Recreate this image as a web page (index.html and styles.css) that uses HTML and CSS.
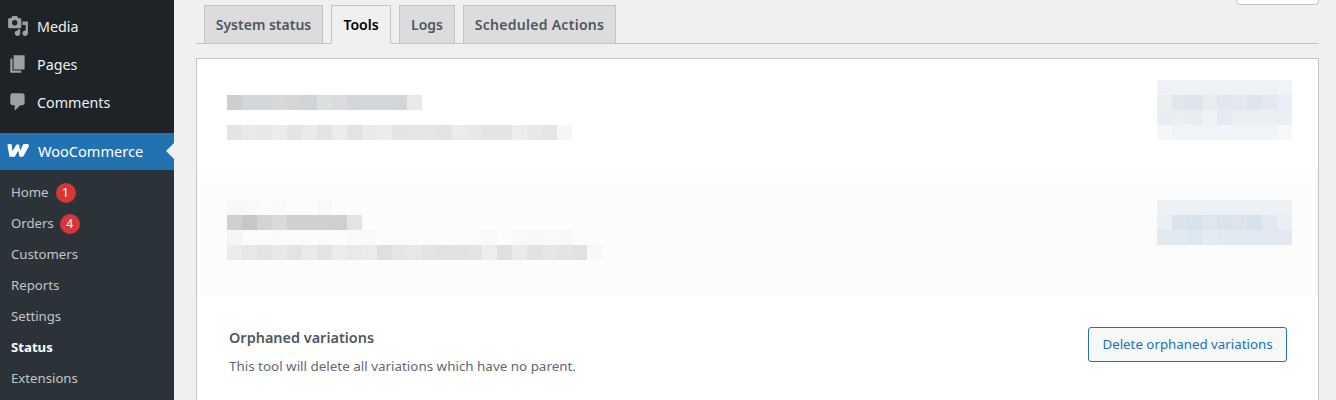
FILE: index.html
```html
<!DOCTYPE html>
<html lang="en">
<head>
<meta charset="utf-8">
<title>WooCommerce status - Tools</title>
<link rel="stylesheet" href="styles.css">
</head>
<body>
<div class="layout">
  <aside class="sidebar">
    <ul class="menu">
      <li class="menu-item">
        <svg class="menu-icon" viewBox="0 0 20 20"><path d="M13 11V4c0-.55-.45-1-1-1h-1.670L9 1H5L3.670 3H2c-.55 0-1 .45-1 1v7c0 .55.45 1 1 1h10c.55 0 1-.45 1-1zM7 4.500c1.380 0 2.500 1.120 2.500 2.500S8.380 9.500 7 9.500 4.500 8.380 4.500 7 5.620 4.500 7 4.500zM14 6h5v10.500c0 1.380-1.120 2.500-2.500 2.500S14 17.880 14 16.500s1.120-2.500 2.500-2.500c.17 0 .34.02.5.05V9h-3V6zm-4 8.050V13h2v3.500c0 1.380-1.120 2.500-2.500 2.500S7 17.880 7 16.500 8.120 14 9.500 14c.17 0 .34.02.5.05z"/></svg>
        <span>Media</span>
      </li>
      <li class="menu-item">
        <svg class="menu-icon" viewBox="0 0 20 20"><path d="M6 15V2h10v13H6zm-1 1h8v2H3V5h2v11z"/></svg>
        <span>Pages</span>
      </li>
      <li class="menu-item">
        <svg class="menu-icon" viewBox="0 0 20 20"><path d="M5 2h9c1.100 0 2 .9 2 2v7c0 1.100-.9 2-2 2h-2l-5 5v-5H5c-1.100 0-2-.9-2-2V4c0-1.100.9-2 2-2z"/></svg>
        <span>Comments</span>
      </li>
      <li class="menu-item menu-item-current">
        <svg class="woo-icon" viewBox="0 0 22 13"><path d="M0.500 1.200C0.500.5 1 0 1.800 0h2.700l1 7.200L9.400.4h2.700l1 6.600L16 .8C16.400 0 17.200 0 18 0h2.200C21.600 0 22.300 1.200 21.700 2.400L17 11.300c-.5 1-1.200 1.500-2.200 1.500h-2.300l-1.200-6.400-3.500 6.400H3.500C2.800 12.800 2.400 12.300 2.300 11.700z"/></svg>
        <span>WooCommerce</span>
      </li>
    </ul>
    <ul class="submenu">
      <li class="submenu-item"><span>Home</span><span class="badge badge-home">1</span></li>
      <li class="submenu-item"><span>Orders</span><span class="badge">4</span></li>
      <li class="submenu-item"><span>Customers</span></li>
      <li class="submenu-item"><span>Reports</span></li>
      <li class="submenu-item"><span>Settings</span></li>
      <li class="submenu-item submenu-item-current"><span>Status</span></li>
      <li class="submenu-item"><span>Extensions</span></li>
    </ul>
  </aside>
  <main class="content">
    <div class="help-tab"></div>
    <nav class="tabs">
      <a class="tab tab-status">System status</a>
      <a class="tab tab-active">Tools</a>
      <a class="tab tab-logs">Logs</a>
      <a class="tab tab-scheduled">Scheduled Actions</a>
    </nav>
    <section class="card">
      <div class="tool tool-first">
        <div class="tool-info">
          <div class="blur blur-t1"></div>
          <div class="blur blur-s1"></div>
        </div>
        <div class="action-blur">
          <div class="blur blur-a1"></div>
          <div class="blur blur-a2"></div>
          <div class="blur blur-a3"></div>
          <div class="blur blur-a4"></div>
        </div>
      </div>
      <div class="tool tool-second">
        <div class="tool-info">
          <div class="blur blur-t2a"></div>
          <div class="blur blur-t2b"></div>
          <div class="blur blur-s2a"></div>
          <div class="blur blur-s2b"></div>
        </div>
        <div class="action-blur">
          <div class="blur blur-b1"></div>
          <div class="blur blur-b2"></div>
          <div class="blur blur-b3"></div>
        </div>
      </div>
      <div class="tool tool-third">
        <div class="tool-text">
          <h3 class="tool-title">Orphaned variations</h3>
          <p class="tool-desc">This tool will delete all variations which have no parent.</p>
        </div>
        <button class="tool-button" type="button">Delete orphaned variations</button>
      </div>
    </section>
  </main>
</div>
</body>
</html>
```
FILE: styles.css
```css
* { box-sizing: border-box; }
html, body { margin: 0; padding: 0; height: 400px; overflow: hidden; }
body {
  background: #f0f0f1;
  font-family: "Noto Sans", "Open Sans", Arial, sans-serif;
  font-size: 14px;
  color: #50575e;
}
ul { list-style: none; margin: 0; padding: 0; }
.layout { display: flex; height: 400px; }

.sidebar { width: 174px; flex: none; background: #1d2327; padding-top: 7px; display: flex; flex-direction: column; }
.menu-item {
  position: relative;
  display: flex;
  align-items: center;
  height: 38px;
  color: #f0f0f1;
  font-size: 14.3px;
}
.menu-item > span { margin-left: 8px; }
.menu-icon { width: 22px; height: 22px; margin-left: 7px; fill: #9ca1a7; flex: none; }
.menu-item-current {
  margin-top: 12px;
  height: 37px;
  padding-bottom: 2px;
  background: #2271b1;
  color: #fff;
  font-size: 14.55px;
}
.menu-item-current::after {
  content: "";
  position: absolute;
  right: 0;
  top: 10px;
  border: 8px solid transparent;
  border-left-width: 0;
  border-right-color: #f0f0f1;
}
.woo-icon { width: 22px; height: 13px; margin-left: 7px; margin-right: 1px; fill: #fff; flex: none; }
.submenu { flex: 1; background: #2c3338; padding-top: 6px; }
.submenu-item {
  display: flex;
  align-items: center;
  height: 31px;
  padding-left: 11px;
  color: #c3c4c7;
  font-size: 13.2px;
}
.submenu-item-current { color: #fff; font-weight: 700; }
.badge {
  width: 20px;
  height: 20px;
  margin: 2px 0 0 6px;
  border-radius: 50%;
  background: #d63638;
  color: #fff;
  font-size: 12px;
  line-height: 20px;
  text-align: center;
}
.badge-home { margin-left: 7px; }

.content { position: relative; flex: 1; padding: 5px 17px 0 22px; min-width: 0; }
.help-tab {
  position: absolute;
  right: 17px;
  top: -20px;
  width: 83px;
  height: 25px;
  background: #fff;
  border: 1px solid #c3c4c7;
  border-radius: 4px;
}
.tabs { display: flex; gap: 8px; height: 39px; padding-left: 8px; border-bottom: 1px solid #c3c4c7; }
.tab {
  display: flex;
  align-items: center;
  justify-content: center;
  height: 39px;
  padding: 0;
  background: #dcdcde;
  border: 1px solid #c3c4c7;
  color: #50575e;
  font-size: 14px;
  font-weight: 600;
}
.tab-status { width: 119px; }
.tab-logs { width: 56px; }
.tab-scheduled { width: 153px; letter-spacing: .28px; }
.tab-active { width: 60px; background: #f0f0f1; border-bottom-color: #f0f0f1; color: #000; }

.card { margin-top: 14px; height: 360px; background: #fff; border: 1px solid #c3c4c7; border-bottom: 0; }
.tool { display: flex; justify-content: space-between; align-items: flex-start; }
.tool-first { height: 111px; padding: 21px 26px 0 30px; }
.tool-first .tool-info { padding-top: 15px; display: flex; flex-direction: column; gap: 15px; }
.tool-second {
  height: 126px;
  padding: 30px 26px 0 30px;
  background: linear-gradient(180deg, #fdfdfd 0 14px, #fcfcfc 0);
}
.tool-third { padding: 31px 31px 0 32px; }
.tool-text { padding-top: 1px; }
.blur { height: 15px; }
.blur-t1 { width: 195px; background: linear-gradient(90deg,#cccfcd 0 15px,#d3d7da 0 45px,#d7d8da 0 60px,#d5d6d6 0 75px,#cfd4d7 0 90px,#dcdfdf 0 105px,#d9dbde 0 120px,#d3d6d8 0 135px,#d3d7d9 0 165px,#d3d6d8 0 180px,#e8e9eb 0); }
.blur-s1 { width: 345px; background: linear-gradient(90deg,#e4e4e4 0 15px,#e8e9ed 0 30px,#e8e8e8 0 45px,#ebecee 0 60px,#e5e4e2 0 75px,#e9eaed 0 90px,#e3e5e4 0 105px,#ececec 0 120px,#e1e3e7 0 135px,#e9eaec 0 150px,#ebecec 0 165px,#e2e4e6 0 180px,#e4e5e5 0 195px,#e5e6e6 0 210px,#e2e3e7 0 225px,#eaebed 0 240px,#e7e8ea 0 255px,#e3e4e6 0 270px,#e4e4e4 0 285px,#ecedef 0 300px,#e7e8ea 0 315px,#e3e5e7 0 330px,#f5f6f8 0); }
.blur-t2a { width: 105px; background: linear-gradient(90deg,#f8f8f8 0 15px,#f9f9f9 0 30px,#fbfbfb 0 45px,#f9f9f9 0 60px,#fcfcfc 0 90px,#f9f9f9 0); }
.blur-t2b { width: 135px; background: linear-gradient(90deg,#d0d0d0 0 15px,#c6c7cc 0 30px,#d0d5d8 0 45px,#d9dadc 0 60px,#ced0d2 0 90px,#cdd1d1 0 105px,#cdcfd1 0 120px,#e0e4e4 0); }
.blur-s2a { width: 345px; background: linear-gradient(90deg,#f5f5f5 0 15px,#fbfbfb 0 45px,#fafafa 0 60px,#fbfbfb 0 75px,#fafbfd 0 90px,#fbfbfb 0 105px,#fcfcfc 0 120px,#f9fbfa 0 135px,#fafafa 0 150px,#fcfcfc 0 165px,#fafbfb 0 195px,#fbfbfb 0 210px,#fcfcfc 0 225px,#fbfbfb 0 255px,#f9f9f9 0 270px,#fcfcfc 0 285px,#f9f9f9 0 300px,#f8f8f8 0 315px,#fafafa 0 330px,#f7f9f8 0); }
.blur-s2b { width: 375px; background: linear-gradient(90deg,#ecebe9 0 15px,#e6e7eb 0 30px,#e4e4e4 0 45px,#e7e8ea 0 60px,#e4e3e1 0 75px,#e9eaec 0 90px,#e3e5e4 0 105px,#ebecee 0 120px,#e8e9eb 0 135px,#eaebed 0 150px,#dfdfdf 0 165px,#e4e5e7 0 180px,#e6e7e9 0 195px,#e3e3e3 0 210px,#e1e2e4 0 240px,#e3e3e3 0 255px,#ecedef 0 270px,#e0e0e0 0 285px,#eaeaea 0 300px,#e1e2e6 0 315px,#e6e6e6 0 330px,#e4e4e6 0 345px,#e0e1e3 0 360px,#f7f8fa 0); }
.action-blur { width: 135px; }
.blur-a1 { background: linear-gradient(90deg,#eef2f6 0 15px,#edf2f6 0 120px,#f1f4f7 0); }
.blur-a2 { background: linear-gradient(90deg,#e9eef1 0 15px,#dfe7ee 0 30px,#dce5ec 0 45px,#e8ecef 0 60px,#e1e7ec 0 75px,#e4e9ef 0 90px,#dce7ed 0 105px,#e4e8f0 0 120px,#e9eef6 0); }
.blur-a3 { background: linear-gradient(90deg,#e8edf5 0 15px,#eaeef3 0 30px,#e7edf1 0 45px,#eff2f4 0 60px,#e6ebf3 0 75px,#e9eef2 0 105px,#ebeff3 0); }
.blur-a4 { background: linear-gradient(90deg,#f3f7fb 0 15px,#eff4f8 0 120px,#f5f8fb 0); }
.blur-b1 { background: #ecf1f5; }
.blur-b2 { background: linear-gradient(90deg,#e9eff4 0 15px,#dae4ec 0 30px,#d6e3ec 0 45px,#dfe7ee 0 60px,#d8e3ec 0 75px,#dbe5ed 0 90px,#d6e3ec 0 105px,#e1e8f0 0 120px,#e8eef6 0); }
.blur-b3 { background: linear-gradient(90deg,#e2e9f0 0 30px,#dee7ee 0 45px,#e4ebf2 0 60px,#e2e9f1 0); }

.tool-title { margin: 0; font-size: 14.45px; line-height: 20px; font-weight: 600; color: #50575e; }
.tool-desc { margin: 9px 0 0; font-size: 13.42px; line-height: 18px; color: #646970; }
.tool-button {
  width: 199px;
  height: 35px;
  padding: 0 0 1px;
  background: #f6f7f7;
  border: 1px solid #2271b1;
  border-radius: 3px;
  color: #2271b1;
  font-family: inherit;
  font-size: 13.3px;
}
```
